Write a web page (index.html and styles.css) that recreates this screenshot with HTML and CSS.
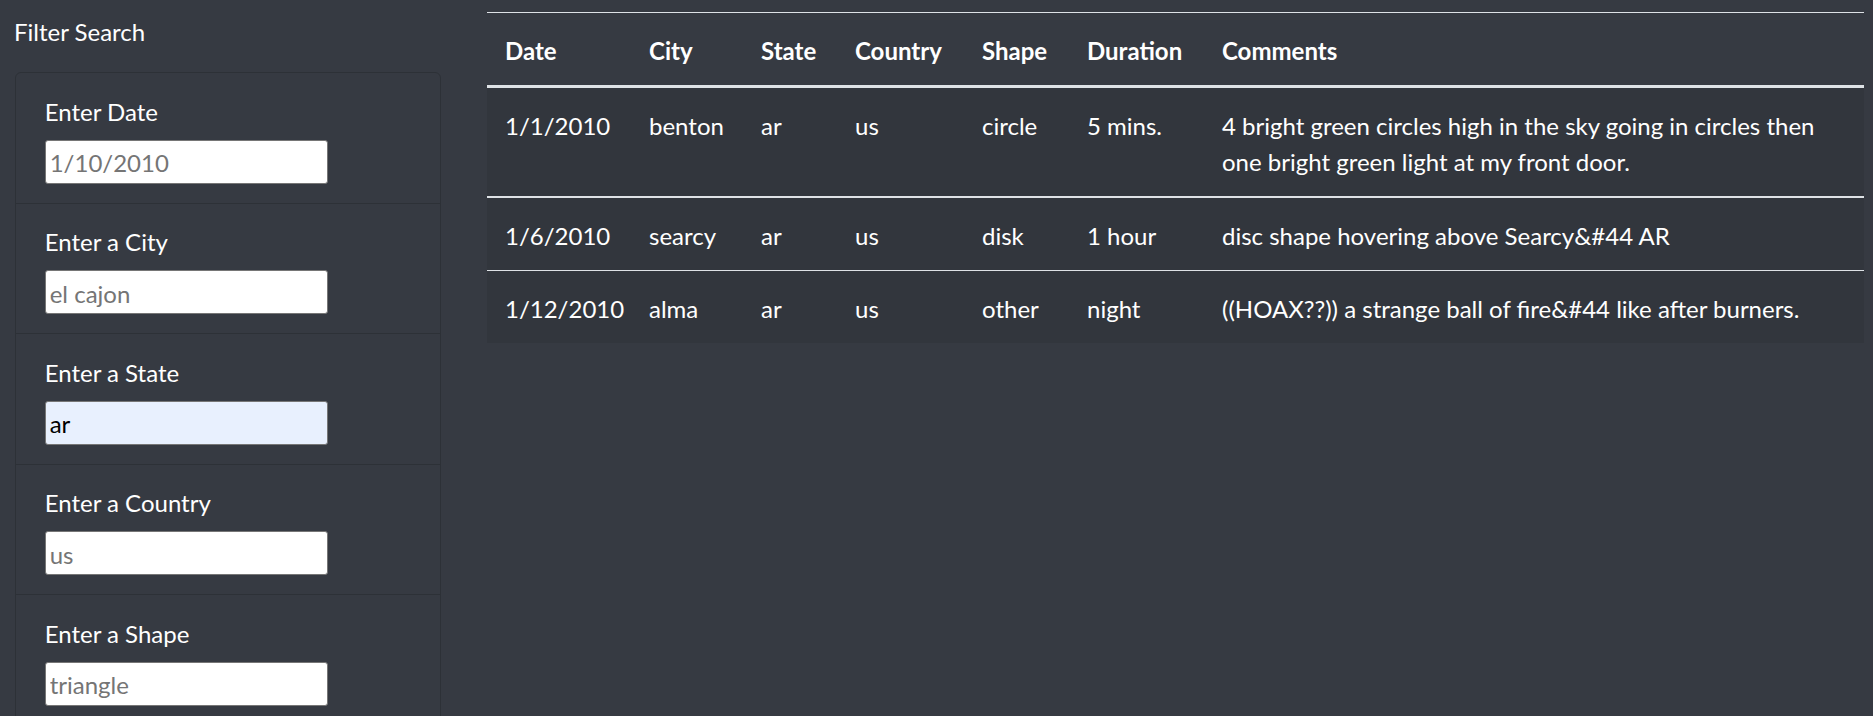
FILE: index.html
```html
<!DOCTYPE html>
<html lang="en">
<head>
<meta charset="utf-8">
<title>UFO Sightings</title>
<link rel="stylesheet" href="styles.css">
</head>
<body>
<div class="page">
  <aside class="sidebar">
    <h2 class="side-title">Filter Search</h2>
    <ul class="filters">
      <li class="filter"><label class="filter-label" for="date">Enter Date</label><input class="filter-input" id="date" type="text" placeholder="1/10/2010"></li>
      <li class="filter"><label class="filter-label" for="city">Enter a City</label><input class="filter-input" id="city" type="text" placeholder="el cajon"></li>
      <li class="filter"><label class="filter-label" for="state">Enter a State</label><input class="filter-input autofilled" id="state" type="text" value="ar"></li>
      <li class="filter"><label class="filter-label" for="country">Enter a Country</label><input class="filter-input" id="country" type="text" placeholder="us"></li>
      <li class="filter"><label class="filter-label" for="shape">Enter a Shape</label><input class="filter-input" id="shape" type="text" placeholder="triangle"></li>
    </ul>
  </aside>
  <main class="results">
    <table class="ufo-table">
      <colgroup>
        <col class="c-date"><col class="c-city"><col class="c-state"><col class="c-country"><col class="c-shape"><col class="c-duration"><col class="c-comments">
      </colgroup>
      <thead>
        <tr><th>Date</th><th>City</th><th>State</th><th>Country</th><th>Shape</th><th>Duration</th><th>Comments</th></tr>
      </thead>
      <tbody>
        <tr class="row-first"><td>1/1/2010</td><td>benton</td><td>ar</td><td>us</td><td>circle</td><td>5 mins.</td><td>4 bright green circles high in the sky going in circles then one bright green light at my front door.</td></tr>
        <tr class="row-mid"><td>1/6/2010</td><td>searcy</td><td>ar</td><td>us</td><td>disk</td><td>1 hour</td><td>disc shape hovering above Searcy&amp;#44 AR</td></tr>
        <tr><td>1/12/2010</td><td>alma</td><td>ar</td><td>us</td><td>other</td><td>night</td><td>((HOAX??)) a strange ball of fire&amp;#44 like after burners.</td></tr>
      </tbody>
    </table>
  </main>
</div>
</body>
</html>
```
FILE: styles.css
```css
html, body {
  margin: 0;
  padding: 0;
  height: 100%;
}
body {
  background: #363a42;
  color: #ffffff;
  font-family: Lato, "Liberation Sans", sans-serif;
  font-size: 24px;
  line-height: 36px;
  overflow: hidden;
}
.page {
  display: flex;
  align-items: flex-start;
  padding: 0 9px 0 12px;
  gap: 46px;
}
.sidebar {
  width: 429px;
  flex: none;
}
.side-title {
  margin: 13.5px 0 22.5px 0;
  padding-left: 2px;
  font-size: 24px;
  line-height: 36px;
  font-weight: 400;
}
.filters {
  list-style: none;
  margin: 0 0 0 2.7px;
  padding: 0;
  border: 1px solid #2d3137;
  border-radius: 6px;
}
.filter {
  padding: 20.75px 30px 18.75px 29px;
  border-bottom: 1px solid #2d3137;
}
.filter-label {
  display: block;
  line-height: 36px;
  margin-bottom: 10px;
}
.filter-input {
  display: block;
  box-sizing: border-box;
  width: 283px;
  height: 44px;
  margin: 0;
  padding: 2px 4px 0 4px;
  border: 1px solid #767676;
  border-radius: 3px;
  background: #ffffff;
  color: #000000;
  font-family: Lato, "Liberation Sans", sans-serif;
  font-size: 24px;
  outline: none;
}
.filter-input::placeholder {
  color: #757575;
  opacity: 1;
}
.autofilled {
  background: #e8f0fe;
}
.results {
  flex: none;
  width: 1377px;
  padding-top: 12px;
}
.ufo-table {
  width: 1377px;
  table-layout: fixed;
  border-collapse: collapse;
  border-top: 1px solid #dee2e6;
}
.c-date { width: 144px; }
.c-city { width: 112px; }
.c-state { width: 94px; }
.c-country { width: 127px; }
.c-shape { width: 105px; }
.c-duration { width: 135px; }
.c-comments { width: 660px; }
.ufo-table th,
.ufo-table td {
  padding: 19.75px 18px 16.25px 18px;
  text-align: left;
  vertical-align: top;
  line-height: 36px;
}
.ufo-table th {
  font-weight: 700;
  border-bottom: 3px solid #dee2e6;
}
.ufo-table tbody tr {
  background: #32363d;
}
.ufo-table .row-first td {
  border-bottom: 2px solid #dee2e6;
}
.ufo-table .row-mid td {
  border-bottom: 1px solid #dee2e6;
}
```
